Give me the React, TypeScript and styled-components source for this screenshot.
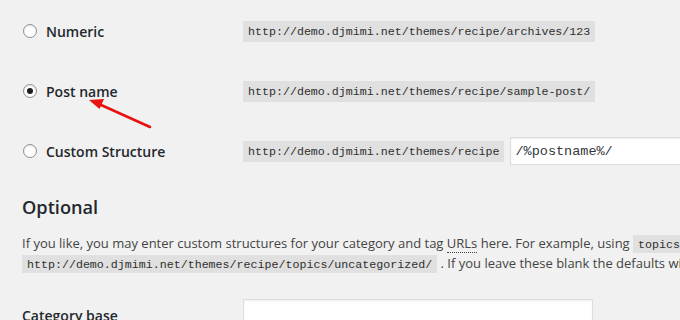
import React from "react";
import styled, { createGlobalStyle } from "styled-components";

const Global = createGlobalStyle`
  html, body { margin: 0; padding: 0; background: #f1f1f1; }
  body { overflow: hidden; width: 680px; height: 320px; }
`;

const Page = styled.div`
  position: relative;
  width: 1100px;
  padding: 1px 0 0 22px;
  font-family: "Open Sans", "Liberation Sans", sans-serif;
  color: #444;
  font-size: 13px;
`;

const OptionRow = styled.div`
  display: grid;
  grid-template-columns: 221px auto;
  align-items: center;
  height: 60px;
`;

const RadioLabel = styled.label`
  display: flex;
  align-items: center;
  gap: 9px;
  font-size: 14px;
  font-weight: 600;
  color: #23282d;
`;

const Radio = styled.span<{ $checked?: boolean }>`
  box-sizing: border-box;
  width: 14px;
  height: 14px;
  margin-left: 1px;
  border-radius: 50%;
  border: 1px solid #8c8f94;
  background: #fff;
  box-shadow: inset 0 1px 2px rgba(0, 0, 0, 0.1);
  display: flex;
  align-items: center;
  justify-content: center;
  &::after {
    content: "";
    display: ${(p) => (p.$checked ? "block" : "none")};
    width: 6px;
    height: 6px;
    border-radius: 50%;
    background: #1d1d1d;
  }
`;

const Cell = styled.div`
  display: flex;
  align-items: center;
  gap: 6px;
`;

const Code = styled.code`
  font-family: "Liberation Mono", "DejaVu Sans Mono", monospace;
  font-size: 11.65px;
  line-height: 16px;
  color: #2f2f2f;
  background: #e0e0e0;
  padding: 3px 5px 2px;
  white-space: nowrap;
`;

const BlockCode = styled(Code)`
  display: inline-block;
`;

const TextInput = styled.input`
  box-sizing: border-box;
  width: 400px;
  height: 28px;
  border: 1px solid #ddd;
  box-shadow: inset 0 1px 2px rgba(0, 0, 0, 0.07);
  background: #fff;
  padding: 0 4px;
  font-family: "Liberation Mono", "DejaVu Sans Mono", monospace;
  font-size: 13.5px;
  color: #32373c;
  outline: none;
`;

const Heading = styled.h2`
  margin: 15px 0 0;
  font-size: 18.2px;
  line-height: 1.3;
  font-weight: 600;
  color: #23282d;
`;

const Para = styled.p`
  margin: 13px 0 0;
  line-height: 1.55;
  width: 1060px;
`;

const Abbr = styled.abbr`
  text-decoration: none;
  border-bottom: 1px dotted #444;
`;

const FieldRow = styled.div`
  display: grid;
  grid-template-columns: 221px auto;
  align-items: start;
  margin-top: 26px;
`;

const FieldLabel = styled.label`
  font-size: 14px;
  font-weight: 600;
  color: #23282d;
  padding-top: 7px;
`;

const BaseInput = styled.input`
  box-sizing: border-box;
  width: 350px;
  height: 28px;
  border: 1px solid #ddd;
  box-shadow: inset 0 1px 2px rgba(0, 0, 0, 0.07);
  background: #fff;
  outline: none;
`;

const Arrow = styled.svg`
  position: absolute;
  left: 0;
  top: 0;
  pointer-events: none;
`;

export default function App() {
  return (
    <>
      <Global />
      <Page>
        <OptionRow>
          <RadioLabel>
            <Radio />
            Numeric
          </RadioLabel>
          <Cell>
            <BlockCode>http://demo.djmimi.net/themes/recipe/archives/123</BlockCode>
          </Cell>
        </OptionRow>
        <OptionRow>
          <RadioLabel>
            <Radio $checked />
            Post name
          </RadioLabel>
          <Cell>
            <BlockCode>http://demo.djmimi.net/themes/recipe/sample-post/</BlockCode>
          </Cell>
        </OptionRow>
        <OptionRow>
          <RadioLabel>
            <Radio />
            Custom Structure
          </RadioLabel>
          <Cell>
            <BlockCode>http://demo.djmimi.net/themes/recipe</BlockCode>
            <TextInput readOnly value="/%postname%/" />
          </Cell>
        </OptionRow>
        <Heading>Optional</Heading>
        <Para>
          If you like, you may enter custom structures for your category and tag <Abbr>URLs</Abbr> here. For
          example, using <Code>topics</Code> as your category base would make your category links like{" "}
          <Code>http://demo.djmimi.net/themes/recipe/topics/uncategorized/</Code> . If you leave these blank the
          defaults will be used.
        </Para>
        <FieldRow>
          <FieldLabel>Category base</FieldLabel>
          <BaseInput readOnly />
        </FieldRow>
        <Arrow width="680" height="320" viewBox="0 0 680 320">
          <line x1="150" y1="127" x2="100" y2="104.5" stroke="#e8120f" strokeWidth="2.6" strokeLinecap="round" />
          <polygon points="89,100 104,99 99.5,109" fill="#e8120f" />
        </Arrow>
      </Page>
    </>
  );
}
